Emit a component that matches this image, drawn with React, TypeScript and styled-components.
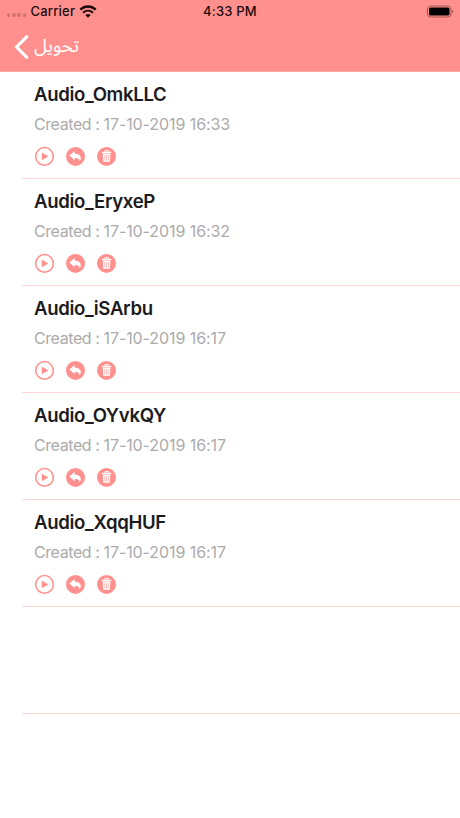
import React from "react";
import styled, { createGlobalStyle } from "styled-components";

const CORAL = "#ff908d";

const GlobalStyle = createGlobalStyle`
  * { box-sizing: border-box; }
  body { margin: 0; background: #fff; }
`;

const Screen = styled.main`
  width: 460px;
  height: 818px;
  overflow: hidden;
  background: #fff;
  font-family: Inter, "Liberation Sans", sans-serif;
`;

const Header = styled.header`
  height: 72px;
  background: ${CORAL};
  border-bottom: 1px solid #ffa6a2;
`;

const StatusBar = styled.div`
  height: 23px;
  display: grid;
  grid-template-columns: 1fr auto 1fr;
  align-items: center;
  padding: 0 6px 0 7px;
  color: #1c0b0b;
`;

const StatusText = styled.span`
  font-size: 13px;
  line-height: 22px;
  font-weight: 500;
  letter-spacing: 0.2px;
  white-space: nowrap;
`;

const Clock = styled(StatusText)`
  padding-right: 1px;
  line-height: 20px;
  padding-bottom: 2px;
`;

const CarrierGroup = styled.div`
  display: flex;
  align-items: center;
  height: 22px;
  padding-bottom: 1px;
`;

const Signal = styled.div`
  display: flex;
  gap: 1.8px;
  width: 23.5px;
  padding-top: 8px;
`;

const SignalDot = styled.i`
  width: 3.4px;
  height: 3.4px;
  border-radius: 50%;
  background: #cf7572;
`;

const WifiIcon = styled.svg`
  width: 18px;
  height: 13px;
  margin-left: 4px;
`;

const BatteryIcon = styled.svg`
  width: 28px;
  height: 13px;
  justify-self: end;
`;

const NavBar = styled.nav`
  height: 48px;
  display: flex;
  align-items: center;
  padding-left: 14px;
`;

const BackButton = styled.button`
  display: flex;
  align-items: center;
  gap: 5px;
  padding: 0;
  border: 0;
  background: none;
  color: #fff;
`;

const BackLabel = styled.span`
  font-family: "Noto Sans Arabic", "DejaVu Sans", sans-serif;
  font-size: 18.5px;
  line-height: 26px;
`;

const List = styled.ul`
  margin: 0;
  padding: 0 0 0 22px;
  list-style: none;
`;

const Row = styled.li`
  height: 107px;
  padding: 10px 0 0 12px;
  border-bottom: 1px solid #ffd5d5;
`;

const Title = styled.h2`
  margin: 0;
  font-size: 18.6px;
  line-height: 24px;
  font-weight: 600;
  letter-spacing: -0.34px;
  color: #1b1b1d;
`;

const Created = styled.p`
  display: flex;
  margin: 7px 0 0;
  font-size: 16px;
  line-height: 22px;
  color: #ababab;
`;

const CreatedLabel = styled.span`
  width: 69.5px;
  letter-spacing: -0.42px;
  white-space: nowrap;
`;

const CreatedDate = styled.time`
  letter-spacing: -0.08px;
  white-space: nowrap;
`;

const Actions = styled.div`
  display: flex;
  gap: 11px;
  margin-top: 11px;
`;

const ActionButton = styled.button`
  width: 20px;
  height: 20px;
  padding: 0;
  border: 0;
  background: none;
  display: flex;
`;

const Glyph = styled.svg`
  width: 20px;
  height: 20px;
  display: block;
`;

const PlayIcon = () => (
  <Glyph viewBox="0 0 20 20">
    <circle cx="10.5" cy="10.4" r="8.8" fill="none" stroke={CORAL} strokeWidth="1.5" />
    <path d="M8 7 14 10.4 8 13.8Z" fill={CORAL} stroke={CORAL} strokeWidth=".5" strokeLinejoin="round" />
  </Glyph>
);

const ReplyIcon = () => (
  <Glyph viewBox="0 0 20 20">
    <circle cx="10.5" cy="10.4" r="9.5" fill={CORAL} />
    <path d="M4.4 9.4 9.7 5v2.6c3.7.2 6.1 2 6.1 4.7 0 1.4-.6 2.3-1.5 3.1.5-2.3-1.3-3.3-4.6-3.4v2.2Z" fill="#fff" />
  </Glyph>
);

const TrashIcon = () => (
  <Glyph viewBox="0 0 20 20">
    <circle cx="10.5" cy="10.4" r="9.5" fill={CORAL} />
    <path d="M8.9 5.8V4.6h3.4v1.2" fill="none" stroke="#fff" strokeWidth="1" />
    <path d="M6 5.8h9.2v1.4H6ZM6.8 7.8h7.6l-.5 8H7.3Z" fill="#fff" />
    <path d="M8.9 9v5.5M10.6 9v5.5M12.3 9v5.5" stroke={CORAL} strokeWidth=".6" />
  </Glyph>
);

const recordings = [
  { name: "Audio_OmkLLC", created: "17-10-2019 16:33" },
  { name: "Audio_EryxeP", created: "17-10-2019 16:32" },
  { name: "Audio_iSArbu", created: "17-10-2019 16:17" },
  { name: "Audio_OYvkQY", created: "17-10-2019 16:17" },
  { name: "Audio_XqqHUF", created: "17-10-2019 16:17" },
];

export default function App() {
  return (
    <Screen>
      <GlobalStyle />
      <Header>
        <StatusBar>
          <CarrierGroup>
            <Signal>{[0, 1, 2, 3].map((n) => <SignalDot key={n} />)}</Signal>
            <StatusText>Carrier</StatusText>
            <WifiIcon viewBox="0 0 18 13" fill="none" stroke="#1c0b0b">
              <path d="M1.3 4.7C5.8.5 12.2.5 16.7 4.7" strokeWidth="2.4" />
              <path d="M4 7.7c3-2.7 7-2.7 10 0" strokeWidth="2.1" />
              <path d="M6.3 10.1c1.7-1.5 3.7-1.5 5.4 0L9 12.8Z" fill="#1c0b0b" stroke="none" />
            </WifiIcon>
          </CarrierGroup>
          <Clock>4:33 PM</Clock>
          <BatteryIcon viewBox="0 0 28 13">
            <rect x="1.5" y="1" width="23.5" height="11" rx="3" fill="none" stroke="#a45451" />
            <rect x="3" y="2.5" width="20.5" height="8" rx="1.6" fill="#000" />
            <path d="M26.2 4.8c1.5.7 1.5 2.7 0 3.4Z" fill="#a45451" />
          </BatteryIcon>
        </StatusBar>
        <NavBar>
          <BackButton>
            <svg width="15" height="24" viewBox="0 0 15 24" fill="none" stroke="#fff" strokeWidth="3.2">
              <path d="M12.6 1.8 2.6 12 12.6 22.2" strokeLinecap="round" />
            </svg>
            <BackLabel lang="ar" dir="rtl">تحويل</BackLabel>
          </BackButton>
        </NavBar>
      </Header>
      <List>
        {recordings.map((item) => (
          <Row key={item.name}>
            <Title>{item.name}</Title>
            <Created>
              <CreatedLabel>Created :</CreatedLabel>
              <CreatedDate>{item.created}</CreatedDate>
            </Created>
            <Actions>
              <ActionButton aria-label="Play"><PlayIcon /></ActionButton>
              <ActionButton aria-label="Share"><ReplyIcon /></ActionButton>
              <ActionButton aria-label="Delete"><TrashIcon /></ActionButton>
            </Actions>
          </Row>
        ))}
        <Row />
      </List>
    </Screen>
  );
}
